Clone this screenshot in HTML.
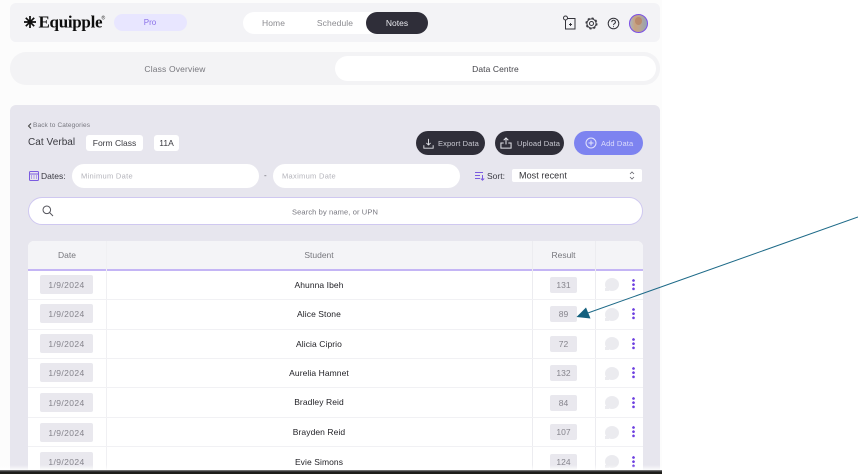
<!DOCTYPE html>
<html lang="en">
<head>
<meta charset="utf-8">
<title>Equipple Data Centre</title>
<style>
*{box-sizing:border-box;margin:0;padding:0}
html,body{width:858px;height:474px;overflow:hidden;background:#fff}
body{position:relative;font-family:"Liberation Sans",sans-serif;color:#333}
#w{position:absolute;left:0;top:0;width:858px;height:474px;filter:blur(.3px)}
.a{position:absolute}
.t{position:absolute;white-space:nowrap;line-height:1;transform:translateY(-50%)}
.c{transform:translate(-50%,-50%)}
.btn{position:absolute;top:131px;height:24px;width:69px;border-radius:12px;background:#2f2e39;color:#c9c9d2;font-size:7.5px;letter-spacing:.12px;display:flex;align-items:center;white-space:nowrap}
.badge{position:absolute;background:#e9e8ee;border-radius:2px;color:#85848c;font-size:8.5px;display:flex;align-items:center;justify-content:center}
.d{letter-spacing:.4px}
.line{position:absolute;left:28px;width:615px;height:1px;background:#f1f1f4}
.bub{position:absolute;left:605px;width:14px;height:13px;background:#ebebef;border-radius:50%}
.bub:after{content:"";position:absolute;left:0;bottom:0;width:4px;height:3px;background:#ebebef}
.dots{position:absolute;left:632px;width:3px;height:12px;background:radial-gradient(circle at 1.5px 1.5px,#6d3fe0 1.2px,transparent 1.5px) 0 0/3px 4.2px repeat-y}
.name{position:absolute;left:106px;width:426px;text-align:center;font-size:8.5px;letter-spacing:.08px;color:#1f1f24;line-height:1;transform:translateY(-50%)}
</style>
</head>
<body>
<div id="w">
<div class="a" style="left:0;top:0;width:662px;height:474px;background:#fcfcfc"></div>

<!-- top bar -->
<div class="a" style="left:10px;top:3px;width:650px;height:39px;background:#f3f3f6;border-radius:6px"></div>
<svg class="a" style="left:24px;top:16px" width="12" height="12" viewBox="0 0 12 12" fill="none" stroke="#0d0d0d" stroke-width="1.700"><path d="M6 0v12M0 6h12M1.800 1.800l8.400 8.400M10.200 1.800l-8.400 8.400"/></svg>
<div class="t" style="left:38.500px;top:22px;font-family:'Liberation Serif',serif;font-weight:700;font-size:17px;letter-spacing:-.3px;color:#0d0d0d">Equipple</div>
<div class="t" style="left:101.500px;top:19px;font-size:5px;color:#222">®</div>
<div class="a" style="left:114px;top:14px;width:73px;height:17px;border-radius:9px;background:#e8e6ff"></div>
<div class="t c" style="left:150px;top:23px;font-size:8px;color:#8a70e8">Pro</div>
<div class="a" style="left:243px;top:12px;width:150px;height:22px;border-radius:11px;background:#fff"></div>
<div class="a" style="left:366px;top:12px;width:62px;height:22px;border-radius:11px;background:#2f2e39"></div>
<div class="t c" style="left:273.500px;top:23px;font-size:8.500px;letter-spacing:.1px;color:#8b8b90">Home</div>
<div class="t c" style="left:335px;top:23px;font-size:8.500px;letter-spacing:.1px;color:#8b8b90">Schedule</div>
<div class="t c" style="left:397px;top:23px;font-size:8.500px;color:#e8e8ee">Notes</div>

<svg class="a" style="left:562px;top:15px" width="15" height="16" viewBox="0 0 15 16" fill="none" stroke="#33333a" stroke-width="1">
<circle cx="3.500" cy="3" r="2"/><path d="M5.500 3.500H13V14H3.500V5"/><path d="M8.500 8v3M7 9.500h3"/></svg>
<svg class="a" style="left:585px;top:17px" width="13" height="13" viewBox="0 0 13 13" fill="none" stroke="#33333a">
<circle cx="6.500" cy="6.500" r="2" stroke-width="1"/><circle cx="6.500" cy="6.500" r="4.600" stroke-width="1"/><circle cx="6.500" cy="6.500" r="5.500" stroke-width="1.100" stroke-dasharray="2.200 2.120"/></svg>
<svg class="a" style="left:607px;top:17px" width="13" height="13" viewBox="0 0 13 13" fill="none" stroke="#33333a" stroke-width="1">
<circle cx="6.500" cy="6.500" r="5.300"/><path d="M4.800 5.100a1.800 1.800 0 1 1 2.700 1.500c-.7.400-1 .8-1 1.500"/><path d="M6.500 9.300v.8"/></svg>
<div class="a" style="left:629px;top:14px;width:19px;height:19px;border-radius:50%;border:1.500px solid #7b4fe6;background:linear-gradient(90deg,#a9b4bf 0%,#c9a27e 30%,#b8a594 60%,#93a4b6 100%)"></div>
<div class="a" style="left:635px;top:17px;width:7px;height:8px;border-radius:50%;background:#b98a6c"></div>

<!-- tabs -->
<div class="a" style="left:10px;top:52px;width:650px;height:33px;background:#f3f3f5;border-radius:16px"></div>
<div class="a" style="left:335px;top:56px;width:321px;height:25px;background:#fff;border-radius:12.500px"></div>
<div class="t c" style="left:175px;top:69px;font-size:8.500px;letter-spacing:.15px;color:#77777d">Class Overview</div>
<div class="t c" style="left:495.500px;top:69px;font-size:8.500px;letter-spacing:.08px;color:#44444a">Data Centre</div>

<!-- panel -->
<div class="a" style="left:10px;top:105px;width:650px;height:369px;background:#e7e6ee;border-radius:6px 6px 0 0"></div>
<svg class="a" style="left:27px;top:122.500px" width="5" height="6" viewBox="0 0 5 6" fill="none" stroke="#444" stroke-width="1"><path d="M4 .5 1.500 3 4 5.500"/></svg>
<div class="t" style="left:33px;top:126px;font-size:6.500px;letter-spacing:.12px;color:#77777f">Back to Categories</div>
<div class="t" style="left:28px;top:143px;font-size:10px;letter-spacing:.05px;color:#3a3a40">Cat Verbal</div>
<div class="a" style="left:86px;top:135px;width:57px;height:16px;background:#fff;border-radius:3px;font-size:8.500px;color:#3a3a40;display:flex;align-items:center;justify-content:center">Form Class</div>
<div class="a" style="left:154px;top:135px;width:25px;height:16px;background:#fff;border-radius:3px;font-size:8.500px;color:#3a3a40;display:flex;align-items:center;justify-content:center">11A</div>

<div class="btn" style="left:416px;padding-left:7px;gap:4px"><svg width="11" height="11" viewBox="0 0 13 13" fill="none" stroke="#e4e4ea" stroke-width="1.100"><path d="M6.500 1v7M4 5.800l2.500 2.500L9 5.800M1 8.500v3.500h11V8.500"/></svg>Export Data</div>
<div class="btn" style="left:495px;padding-left:5px;gap:5px"><svg width="12" height="12" viewBox="0 0 13 13" fill="none" stroke="#e4e4ea" stroke-width="1.100"><path d="M6.500 8V1M4 3.500 6.500 1 9 3.500M9 6.500h3V12H1V6.500h3"/></svg>Upload Data</div>
<div class="btn" style="left:574px;background:#7d83f0;color:#dcdcfb;padding-left:11px;gap:4px"><svg width="12" height="12" viewBox="0 0 12 12" fill="none" stroke="#e4e4fb" stroke-width="1"><circle cx="6" cy="6" r="5"/><path d="M6 3.500v5M3.500 6h5"/></svg>Add Data</div>

<svg class="a" style="left:29px;top:170px" width="10" height="11" viewBox="0 0 10 11" fill="none" stroke="#7b5be0" stroke-width="1"><rect x=".5" y="1.500" width="9" height="9" rx="1"/><path d="M.5 4h9"/><path d="M2 6h1M4.500 6h1M7 6h1M2 8h1M4.500 8h1M7 8h1" stroke-width=".9"/></svg>
<div class="t" style="left:41px;top:176px;font-size:8.500px;color:#3a3a42">Dates:</div>
<div class="a" style="left:72px;top:164px;width:187px;height:24px;background:#fff;border-radius:12px"></div>
<div class="t" style="left:81px;top:176px;font-size:7.500px;letter-spacing:.3px;color:#b3b3ba">Minimum Date</div>
<div class="t" style="left:264px;top:176px;font-size:8px;color:#66666e">-</div>
<div class="a" style="left:273px;top:164px;width:187px;height:24px;background:#fff;border-radius:12px"></div>
<div class="t" style="left:282px;top:176px;font-size:7.500px;letter-spacing:.3px;color:#b3b3ba">Maximum Date</div>
<svg class="a" style="left:475px;top:171px" width="10" height="10" viewBox="0 0 10 10" fill="none" stroke="#7b5be0" stroke-width="1"><path d="M0 1.500h8M0 4.500h5M0 7.500h5M7.500 4v5M5.800 7.500l1.700 1.700 1.700-1.700"/></svg>
<div class="t" style="left:487px;top:176px;font-size:8.500px;color:#3a3a42">Sort:</div>
<div class="a" style="left:512px;top:169px;width:130px;height:13px;background:#fff;border-radius:2px"></div>
<div class="t" style="left:519px;top:176px;font-size:9px;letter-spacing:.08px;color:#333338">Most recent</div>
<svg class="a" style="left:629px;top:171px" width="6" height="9" viewBox="0 0 6 9" fill="none" stroke="#66666e" stroke-width=".8"><path d="M1 3 3 1l2 2M1 6l2 2 2-2"/></svg>

<div class="a" style="left:28px;top:197px;width:615px;height:28px;background:#fff;border:1px solid #cfc8f0;border-radius:14px"></div>
<svg class="a" style="left:42px;top:205px" width="12" height="12" viewBox="0 0 12 12" fill="none" stroke="#55555c" stroke-width="1"><circle cx="4.800" cy="4.800" r="3.800"/><path d="m7.500 7.500 3.500 3.500"/></svg>
<div class="t c" style="left:335px;top:212px;font-size:7.500px;letter-spacing:.12px;color:#77777f">Search by name, or UPN</div>

<!-- table -->
<div class="a" style="left:28px;top:241px;width:615px;height:233px;background:#fff;border-radius:6px 6px 0 0"></div>
<div class="a" style="left:28px;top:241px;width:615px;height:28px;background:#f4f4f7;border-radius:6px 6px 0 0"></div>
<div class="a" style="left:28px;top:269px;width:615px;height:2px;background:#c4b5f5"></div>
<div class="a" style="left:106px;top:241px;width:1px;height:233px;background:#f0f0f3"></div>
<div class="a" style="left:532px;top:241px;width:1px;height:233px;background:#ececf0"></div>
<div class="a" style="left:595px;top:241px;width:1px;height:233px;background:#ececf0"></div>
<div class="t c" style="left:67px;top:255px;font-size:8.500px;color:#77777d">Date</div>
<div class="t c" style="left:319px;top:255px;font-size:8.500px;color:#77777d">Student</div>
<div class="t c" style="left:563.500px;top:255px;font-size:8.500px;color:#77777d">Result</div>

<div class="line" style="top:299px"></div>
<div class="line" style="top:329px"></div>
<div class="line" style="top:358px"></div>
<div class="line" style="top:387px"></div>
<div class="line" style="top:417px"></div>
<div class="line" style="top:446px"></div>

<div class="badge d" style="left:40px;top:275px;width:53px;height:19px">1/9/2024</div>
<div class="name" style="top:285px">Ahunna Ibeh</div>
<div class="badge" style="left:550px;top:277px;width:27px;height:16px">131</div>
<div class="bub" style="top:278px"></div><div class="dots" style="top:279px"></div>

<div class="badge d" style="left:40px;top:304px;width:53px;height:19px">1/9/2024</div>
<div class="name" style="top:314px">Alice Stone</div>
<div class="badge" style="left:550px;top:306px;width:27px;height:16px">89</div>
<div class="bub" style="top:308px"></div><div class="dots" style="top:308px"></div>

<div class="badge d" style="left:40px;top:334px;width:53px;height:19px">1/9/2024</div>
<div class="name" style="top:344px">Alicia Ciprio</div>
<div class="badge" style="left:550px;top:336px;width:27px;height:16px">72</div>
<div class="bub" style="top:337px"></div><div class="dots" style="top:338px"></div>

<div class="badge d" style="left:40px;top:363px;width:53px;height:19px">1/9/2024</div>
<div class="name" style="top:373px">Aurelia Hamnet</div>
<div class="badge" style="left:550px;top:365px;width:27px;height:16px">132</div>
<div class="bub" style="top:367px"></div><div class="dots" style="top:367px"></div>

<div class="badge d" style="left:40px;top:393px;width:53px;height:19px">1/9/2024</div>
<div class="name" style="top:402px">Bradley Reid</div>
<div class="badge" style="left:550px;top:395px;width:27px;height:16px">84</div>
<div class="bub" style="top:396px"></div><div class="dots" style="top:397px"></div>

<div class="badge d" style="left:40px;top:423px;width:53px;height:19px">1/9/2024</div>
<div class="name" style="top:432px">Brayden Reid</div>
<div class="badge" style="left:550px;top:424px;width:27px;height:16px">107</div>
<div class="bub" style="top:426px"></div><div class="dots" style="top:426px"></div>

<div class="badge d" style="left:40px;top:452px;width:53px;height:19px">1/9/2024</div>
<div class="name" style="top:461.500px">Evie Simons</div>
<div class="badge" style="left:550px;top:454px;width:27px;height:16px">124</div>
<div class="bub" style="top:455px"></div><div class="dots" style="top:456px"></div>

<!-- bottom fade and edge -->
<div class="a" style="left:0;top:465px;width:662px;height:5px;background:linear-gradient(rgba(255,255,255,0),rgba(255,255,255,.85))"></div>
<div class="a" style="left:0;top:470px;width:662px;height:4px;background:linear-gradient(#8a8a8a,#1c1c1c 50%,#202018)"></div>

<!-- annotation arrow -->
<svg class="a" style="left:0;top:0" width="858" height="474" viewBox="0 0 858 474" fill="none">
<path d="M858 217 585 314" stroke="#1d6a88" stroke-width="1"/>
<path d="M576.500 317 586 307.500 590.500 318.500Z" fill="#14607e"/>
</svg>
</div>
</body>
</html>
